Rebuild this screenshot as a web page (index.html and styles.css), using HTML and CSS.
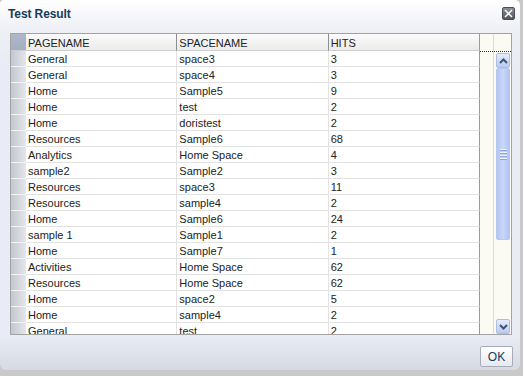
FILE: index.html
```html
<!DOCTYPE html>
<html lang="en">
<head>
  <meta charset="UTF-8">
  <title>Test Result</title>
  <link rel="stylesheet" href="styles.css">
</head>
<body>

  <div class="dialog">
    <div class="titlebar">
      <h1 class="title">Test Result</h1>
      <button class="close-btn" title="Close">
        <svg width="9" height="9" viewBox="0 0 9 9"><path d="M1 1 L8 8 M8 1 L1 8" stroke="#fff" stroke-width="1.5" fill="none"/></svg>
      </button>
    </div>

    <!-- Results grid -->
    <div class="grid">
      <div class="grid-main">
        <table class="results">
          <thead>
            <tr>
              <th class="rowhead corner"></th>
              <th>PAGENAME</th>
              <th>SPACENAME</th>
              <th>HITS</th>
            </tr>
          </thead>
          <tbody id="rows"></tbody>
        </table>
      </div>
      <div class="filler">
        <div class="filler-head"></div>
      </div>
      <div class="vscroll">
        <div class="filler-head"></div>
        <div class="sb-btn">
          <svg width="9" height="6" viewBox="0 0 9 6"><path d="M1 5 L4.5 1.5 L8 5" stroke="#3e5377" stroke-width="2" fill="none"/></svg>
        </div>
        <div class="sb-track">
          <div class="sb-thumb">
            <div class="grip"><span></span><span></span><span></span><span></span></div>
          </div>
        </div>
        <div class="sb-btn">
          <svg width="9" height="6" viewBox="0 0 9 6"><path d="M1 1 L4.5 4.5 L8 1" stroke="#3e5377" stroke-width="2" fill="none"/></svg>
        </div>
      </div>
    </div>

    <div class="footer">
      <button class="ok-btn">OK</button>
    </div>
  </div>

  <script>
    const results = [
      ['General', 'space3', 3],
      ['General', 'space4', 3],
      ['Home', 'Sample5', 9],
      ['Home', 'test', 2],
      ['Home', 'doristest', 2],
      ['Resources', 'Sample6', 68],
      ['Analytics', 'Home Space', 4],
      ['sample2', 'Sample2', 3],
      ['Resources', 'space3', 11],
      ['Resources', 'sample4', 2],
      ['Home', 'Sample6', 24],
      ['sample 1', 'Sample1', 2],
      ['Home', 'Sample7', 1],
      ['Activities', 'Home Space', 62],
      ['Resources', 'Home Space', 62],
      ['Home', 'space2', 5],
      ['Home', 'sample4', 2],
      ['General', 'test', 2]
    ];

    const tbody = document.getElementById('rows');
    results.forEach(r => {
      const tr = document.createElement('tr');
      tr.innerHTML = `
        <td class="rowhead"></td>
        <td>${r[0]}</td>
        <td>${r[1]}</td>
        <td>${r[2]}</td>
      `;
      tbody.appendChild(tr);
    });
  </script>

</body>
</html>
```

FILE: styles.css
```css
body {
  margin: 0;
  background: #c9c9c9;
  font-family: 'Liberation Sans', Arial, sans-serif;
  font-size: 11px;
  color: #222;
}

.dialog {
  width: 520px;
  height: 370px;
  display: flex;
  flex-direction: column;
  border-radius: 4px 5px 6px 6px;
  background: linear-gradient(to bottom, #ffffff 0px, #eef0f5 30px, #e9ecf4 60px, #e9ecf4 335px, #d6dae4 370px);
  overflow: hidden;
}

.titlebar {
  height: 33px;
  display: flex;
  justify-content: space-between;
  align-items: flex-start;
  padding: 0 5px 0 8px;
  box-sizing: border-box;
}

.title {
  margin: 7px 0 0;
  font-size: 12px;
  font-weight: bold;
  color: #173b5b;
  letter-spacing: -0.1px;
}

.close-btn {
  margin-top: 7px;
  width: 13px;
  height: 13px;
  padding: 0;
  border: 1px solid #4a4f57;
  border-radius: 2px;
  background: linear-gradient(to bottom, #8a8f97, #50555e);
  display: flex;
  align-items: center;
  justify-content: center;
  cursor: pointer;
}

.grid {
  margin-left: 10px;
  width: 502px;
  height: 302px;
  box-sizing: border-box;
  border: 1px solid #a3a3a3;
  display: flex;
  background: #fbfbf4;
}

.grid-main {
  width: 469px;
  overflow: hidden;
  flex: none;
}

.results {
  table-layout: fixed;
  border-collapse: separate;
  border-spacing: 0;
  width: 469px;
}

.results th,
.results td {
  box-sizing: border-box;
  padding: 1px 0 0 2px;
  text-align: left;
  white-space: nowrap;
  overflow: hidden;
  width: 151px;
}

.results th {
  height: 17px;
  font-weight: normal;
  color: #222;
  background: linear-gradient(to bottom, #fbfbfb, #ebebeb);
  border-right: 1px solid #8e8e8e;
  border-bottom: 1px solid #cfcfcf;
}

.results td {
  height: 16px;
  line-height: 14px;
  background: #fff;
  border-right: 1px solid #e2e2e2;
  border-bottom: 1px solid #e2e2e2;
}

.results th:last-child,
.results td:last-child {
  border-right-color: #9a9a9a;
}

.results .rowhead {
  width: 15px;
  padding: 0;
  background: linear-gradient(to right, #c2c7d0, #e4e6ea);
  border-right: none;
  border-bottom: 1px solid #f4f4f6;
}

.results .corner {
  background: linear-gradient(to bottom, #aeb8ca, #a3aec2);
  border-bottom: 1px solid #c9ced8;
}

.filler {
  width: 14px;
  flex: none;
  border-right: 1px solid #dcdcd4;
  box-sizing: border-box;
}

.filler-head {
  height: 17px;
  border-bottom: 1px dotted #333;
}

.vscroll {
  flex: 1;
  display: flex;
  flex-direction: column;
}

.sb-btn {
  width: 14px;
  height: 15px;
  margin: 1px 0 0 2px;
  box-sizing: border-box;
  border: 1px solid #aebde0;
  border-radius: 2px;
  background: linear-gradient(to bottom, #e6edfc, #b9caf1);
  display: flex;
  align-items: center;
  justify-content: center;
}

.sb-track {
  flex: 1;
  margin-left: 2px;
  width: 14px;
}

.sb-thumb {
  height: 172px;
  box-sizing: border-box;
  border: 1px solid #b7c7ee;
  border-radius: 2px;
  background: linear-gradient(to right, #b3c6f2, #c9d7fa 50%, #b0c3f0);
  display: flex;
  align-items: center;
  justify-content: center;
}

.grip {
  display: flex;
  flex-direction: column;
  gap: 1px;
}

.grip span {
  display: block;
  width: 7px;
  height: 1px;
  background: #eef3ff;
  border-bottom: 1px solid #8ea6dc;
}

.footer {
  flex: 1;
  display: flex;
  justify-content: flex-end;
  align-items: flex-start;
  padding: 11px 7px 0 0;
}

.ok-btn {
  width: 33px;
  height: 21px;
  padding: 0;
  font-family: 'Liberation Sans', Arial, sans-serif;
  font-size: 12px;
  color: #173b5b;
  border: 1px solid #a7adb8;
  border-radius: 2px;
  background: linear-gradient(to bottom, #ffffff, #e6e9ef);
  cursor: pointer;
}
```
